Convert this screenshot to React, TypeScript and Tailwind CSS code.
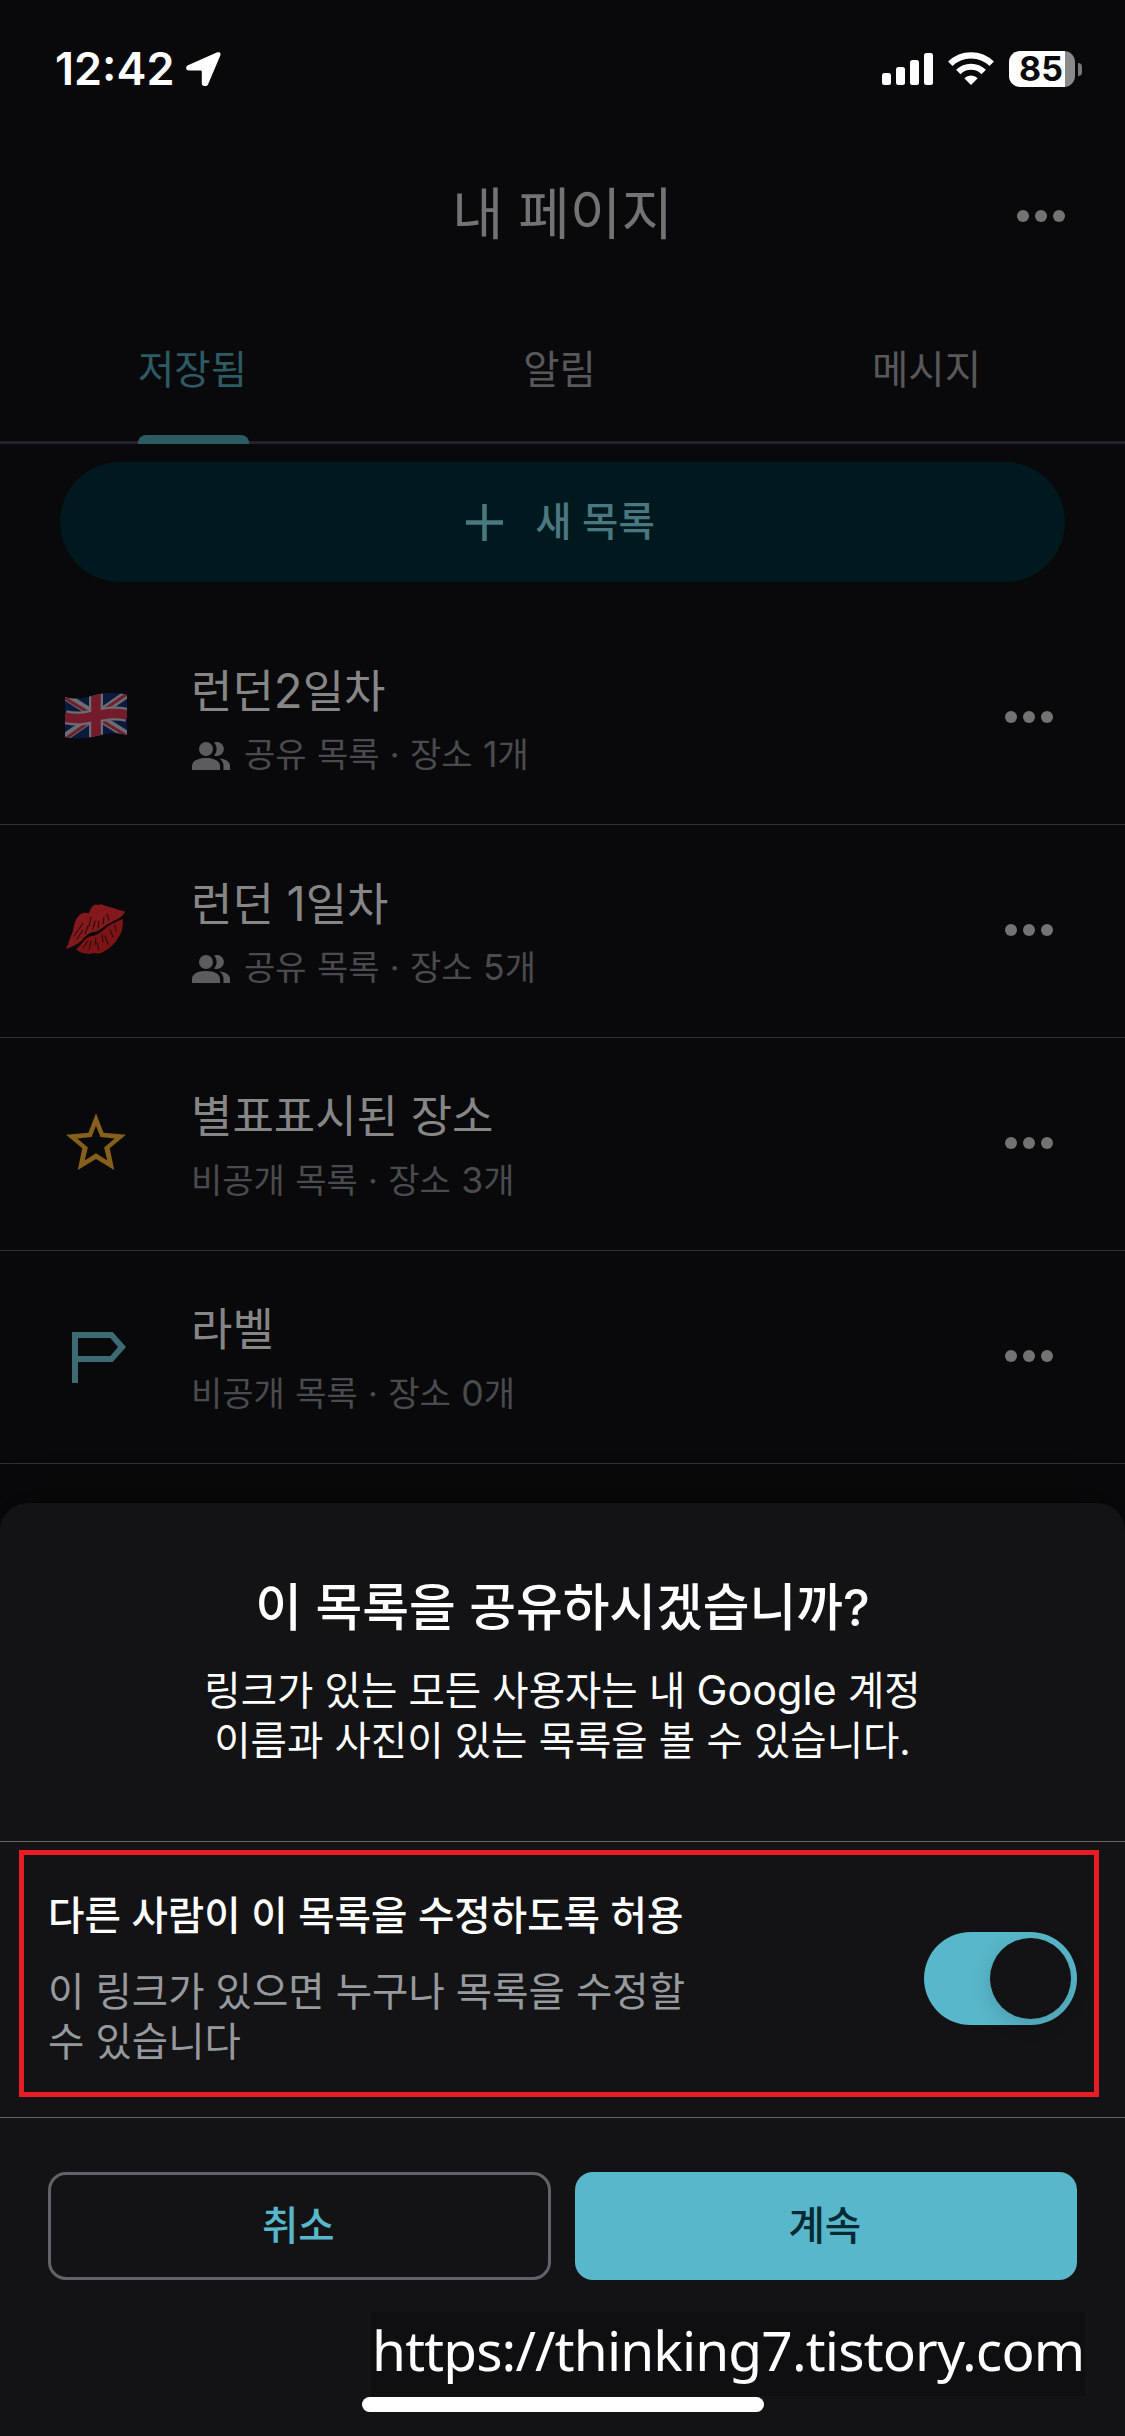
import React from "react";

const sans = "font-['Inter','Noto_Sans_CJK_KR',sans-serif]";

function LocationArrow() {
  return (
    <svg className="ml-[12px] h-[36px] w-[36px]" viewBox="0 0 36 36" fill="#fff">
      <path d="M33.700 1.600c1 .8 1 1.800.6 3L22 33.400c-1.200 2.600-6.200 2.200-6.200-1V21c0-1-.5-1.500-1.500-1.500H3C-.4 19.500-.8 15.500 2 14.200L30.700 1.500c1.200-.5 2.200-.5 3 .1z" />
    </svg>
  );
}

function StatusBar() {
  return (
    <div className="flex h-[132px] items-start justify-between pl-[55px] pr-[43px] pt-[51px] text-white">
      <div className="flex h-[36px] items-center">
        <span className="w-[119px] whitespace-nowrap text-[45px] font-semibold leading-[36px]">12:42</span>
        <LocationArrow />
      </div>
      <div className="flex h-[36px] items-center">
        <svg className="h-[36px] w-[51px]" viewBox="0 0 51 36" fill="#fff">
          <rect x="0" y="22" width="9" height="12" rx="2.500" />
          <rect x="14" y="16" width="9" height="18" rx="2.500" />
          <rect x="28" y="9" width="9" height="25" rx="2.500" />
          <rect x="42" y="2" width="9" height="32" rx="2.500" />
        </svg>
        <svg className="ml-[15px] h-[36px] w-[46px]" viewBox="0 0 46 36" fill="none" stroke="#fff" strokeWidth="6.200">
          <path d="M2.300 12.800a29.500 29.500 0 0 1 41.400 0" />
          <path d="M10.300 21a18 18 0 0 1 25.400 0" />
          <path d="M23 34l-6.700-6.700a9.500 9.500 0 0 1 13.400 0z" fill="#fff" stroke="none" />
        </svg>
        <div className="ml-[15px] flex h-[36px] w-[66px] items-center rounded-[11px] bg-[linear-gradient(90deg,#fff_56px,#8a8a8b_56px)] pl-[10px]">
          <span className="text-[34px] font-bold leading-[36px] text-[#09090b]">85</span>
        </div>
        <div className="ml-[3px] h-[13px] w-[4px] rounded-r-full bg-[#777778]" />
      </div>
    </div>
  );
}

function Dots() {
  return (
    <div className="flex gap-[6px]">
      <i className="size-[12px] rounded-full bg-[#737374]" />
      <i className="size-[12px] rounded-full bg-[#737374]" />
      <i className="size-[12px] rounded-full bg-[#737374]" />
    </div>
  );
}

function UnionJack() {
  return (
    <svg className="mb-[2px] h-[46px] w-[62px]" viewBox="0 0 62 46">
      <defs>
        <clipPath id="wave">
          <path d="M0 4C10 7 20 5 31 2S52 -1 62 2V42C52 39 42 40 31 43S10 46 0 44z" />
        </clipPath>
      </defs>
      <g clipPath="url(#wave)">
        <rect width="62" height="46" fill="#0a1a3c" />
        <path d="M0 3L62 42M0 44L62 1" stroke="#6c6c73" strokeWidth="8" />
        <path d="M0 5L31 24M31 24L62 43M0 46L31 24M31 22L62 1" stroke="#701d2c" strokeWidth="3" />
        <path d="M0 24C12 27 21 25 31 23S50 19 62 22M31 0V46" stroke="#6c6c73" strokeWidth="14" fill="none" />
        <path d="M0 24C12 27 21 25 31 23S50 19 62 22M31 0V46" stroke="#731a2b" strokeWidth="9.500" fill="none" />
      </g>
    </svg>
  );
}

function Lips() {
  return (
    <svg className="mb-[2px] h-[54px] w-[62px]" viewBox="0 0 62 54">
      <path d="M1 47C4 41 5 35 8 29C9 22 11 15 16 12C19 9 22 12 24 11C26 5 29 1 33 3C36 1 38 3 41 4C46 5 50 7 54 8C57 9 60 9 60 10C57 16 50 18 45 21C38 24 36 29 29 30C24 30 21 34 16 39C12 43 6 45 1 47z" fill="#83191c" />
      <path d="M11 47C17 43 19 36 26 34C34 34 38 27 45 23C50 20 55 18 58 17C58 25 57 31 53 36C49 43 44 47 38 50C33 53 29 50 24 52C19 51 14 51 11 47z" fill="#7c1416" />
      <path d="M9 34l4-6M12 37l6-9M14 27l4-6M20 32l3-8M24 24l2-9M28 27l2-8M33 26l1-7M38 22l1-7M44 18l-2-6M18 46l5-7M24 48l2-9M30 43l1-7M34 48l-2-7M38 40l-1-7M43 42l-3-8M48 35l-3-7M51 29l-1-6" stroke="#2a0a0c" strokeWidth="1.100" strokeLinecap="round" />
    </svg>
  );
}

function Star() {
  return (
    <svg className="h-[62px] w-[62px]" viewBox="0 0 62 62" fill="#84601a" fillRule="evenodd">
      <path d="M31 1.300L38.600 20.700L61 22.700L44.700 36.300L49.300 58L31 47L12.700 58L17.300 36.300L1 22.700L23.400 20.700zM31 13.700L26.600 24.900L12.300 26.400L22.900 35.400L19.700 48.400L31 41.300L42.300 48.400L39.100 35.400L49.700 26.400L35.400 24.900z" />
    </svg>
  );
}

function LabelFlag() {
  return (
    <svg className="h-[54px] w-[62px]" viewBox="0 0 62 54" fill="#3d6b74" fillRule="evenodd">
      <path d="M7 3H47.700L61 18L47.700 33H13V54H7zM13 9V27H45.300L53 18L45.300 9z" />
    </svg>
  );
}

function People() {
  return (
    <svg className="ml-px mr-[14px] mt-[3px] h-[28px] w-[38px]" viewBox="0 0 38 28" fill="#5c5c5e">
      <circle cx="14" cy="7" r="7" />
      <path d="M0 28v-4c0-4.500 5-8 14-8s14 3.500 14 8v4z" />
      <path d="M22 .6a7 7 0 1 1 0 12.800C25.500 9.800 25.500 4.200 22 .6z" />
      <path d="M27.500 16.500C34 17 38 20 38 24v4h-6.500v-4c0-3.200-1.500-5.500-4-7.500z" />
    </svg>
  );
}

/* Sets digits and Latin words slightly larger than the Hangul round them. */
function Mixed({ text }: { text: string }) {
  return (
    <>
      {text.split(/([0-9A-Za-z]+)/).map((part, i) =>
        i % 2 ? (
          <span key={i} className="text-[1.05em]">
            {part}
          </span>
        ) : (
          part
        )
      )}
    </>
  );
}

const lists = [
  { title: "런던2일차", sub: "공유 목록 · 장소 1개", shared: true, icon: <UnionJack /> },
  { title: "런던 1일차", sub: "공유 목록 · 장소 5개", shared: true, icon: <Lips /> },
  { title: "별표표시된 장소", sub: "비공개 목록 · 장소 3개", shared: false, icon: <Star /> },
  { title: "라벨", sub: "비공개 목록 · 장소 0개", shared: false, icon: <LabelFlag /> },
];

function ListRow({ item }: { item: (typeof lists)[number] }) {
  return (
    <div className="flex h-[213px] items-center border-b border-[#303033] pb-[2px] pl-[65px] pr-[72px]">
      <div className="flex w-[62px] justify-center">{item.icon}</div>
      <div className="ml-[64px] flex-1 pt-[10px]">
        <div className="h-[64px] text-[45px] leading-[65px] text-[#868687]">
          <Mixed text={item.title} />
        </div>
        <div className="flex h-[65px] items-center text-[34px] leading-[65px] text-[#4a4b4e]">
          {item.shared && <People />}
          <span className="[word-spacing:0.8px]">
            <Mixed text={item.sub} />
          </span>
        </div>
      </div>
      <Dots />
    </div>
  );
}

function Sheet() {
  return (
    <div className="absolute inset-x-0 bottom-0 flex h-[933px] flex-col rounded-t-[28px] bg-[#131315] shadow-[0_0_40px_rgba(0,0,0,0.5)]">
      <div className="h-[338px] pt-[70px] text-center text-white">
        <h2 className="text-[50.800px] font-medium leading-[70px]">이 목록을 공유하시겠습니까?</h2>
        <p className="mt-[22px] text-[39.500px] leading-[50px] [word-spacing:0.1px]">
          <Mixed text="링크가 있는 모든 사용자는 내 Google 계정" />
          <br />
          이름과 사진이 있는 목록을 볼 수 있습니다.
        </p>
      </div>
      <div className="h-[277px] border-y border-[#66666b] pl-[19px] pr-[26px] pt-[8px]">
        <div className="flex h-[247px] items-center justify-between border-[5px] border-[#e81c24] pl-[24px] pr-[17px] pt-[10px]">
          <div>
            <div className="text-[39.600px] font-medium leading-[50px] text-white">다른 사람이 이 목록을 수정하도록 허용</div>
            <p className="mt-[26px] text-[39.500px] leading-[50px] text-[#96999d]">
              이 링크가 있으면 누구나 목록을 수정할
              <br />수 있습니다
            </p>
          </div>
          <div className="flex h-[93px] w-[153px] items-center justify-end rounded-full bg-[#58b7ca] pr-[6px]">
            <div className="size-[81px] rounded-full bg-[#131315] shadow-[0_6px_20px_rgba(0,0,0,0.15)]" />
          </div>
        </div>
      </div>
      <div className="mt-[54px] grid grid-cols-2 gap-[24px] px-[48px] text-[39.500px] font-medium">
        <button className="h-[108px] rounded-[18px] border-[3px] border-[#626368] pr-[2px] pt-[2px] text-[#58b7ca]">취소</button>
        <button className="h-[108px] rounded-[18px] bg-[#58b7ca] pr-[2px] pt-[2px] text-[#052a33]">계속</button>
      </div>
      <div className="ml-[371px] mt-[32px] h-[84px] w-[714px] whitespace-nowrap bg-[#0f0f11] pl-[1px] font-['Noto_Sans',sans-serif] text-[55px] leading-[76px] tracking-[-0.850px] text-white">
        https://thinking7.tistory.com
      </div>
      <div className="ml-[362px] mt-px h-[15px] w-[402px] rounded-full bg-white" />
    </div>
  );
}

export default function App() {
  return (
    <div className={`relative h-[2436px] w-[1125px] overflow-hidden bg-[#09090b] ${sans}`}>
      <StatusBar />
      <div className="relative flex h-[168px] items-center justify-end pr-[60px]">
        <h1 className="absolute inset-x-0 bottom-[46px] text-center text-[56px] leading-[80px] text-[#737374] [word-spacing:-1px]">내 페이지</h1>
        <Dots />
      </div>
      <div className="flex h-[144px] border-b-[3px] border-[#232327] pl-[9px] pr-[15px] text-[39.500px] text-[#58585a]">
        <div className="flex flex-1 flex-col items-center text-[#2c5b64]">
          <span className="flex h-[135px] shrink-0 items-center pt-[7px]">저장됨</span>
          <span className="relative z-10 ml-px h-[9px] w-[111px] shrink-0 rounded-t-[8px] bg-[#2c5b64]" />
        </div>
        <div className="flex h-[135px] flex-1 items-center justify-center pt-[7px]">알림</div>
        <div className="flex h-[135px] flex-1 items-center justify-center pt-[7px]">메시지</div>
      </div>
      <div className="px-[60px] pt-[18px]">
        <div className="flex h-[120px] items-center justify-center rounded-full bg-[#00191e] pr-[4px] text-[39.500px] font-medium text-[#4b7880]">
          <svg className="mr-[32px] h-[37px] w-[37px]" viewBox="0 0 37 37" stroke="#4b7880" strokeWidth="4.500">
            <path d="M18.500 0V37M0 18.500H37" />
          </svg>
          <span className="pt-[2px]">새 목록</span>
        </div>
      </div>
      <div className="mt-[30px]">
        {lists.map((item) => (
          <ListRow key={item.title} item={item} />
        ))}
      </div>
      <Sheet />
    </div>
  );
}
